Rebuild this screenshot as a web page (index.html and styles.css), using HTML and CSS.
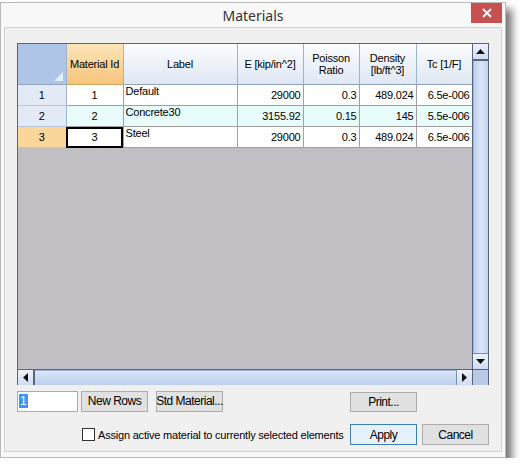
FILE: index.html
```html
<!DOCTYPE html>
<html lang="en">
<head>
    <meta charset="UTF-8">
    <title>Materials</title>
    <link rel="stylesheet" href="styles.css">
</head>
<body>
    <div class="window">
        <div class="titlebar">
            <span class="title">Materials</span>
            <div class="close">
                <svg width="10" height="10" viewBox="0 0 10 10"><path d="M1 1 L9 9 M9 1 L1 9" stroke="#fff" stroke-width="1.8"/></svg>
            </div>
        </div>
        <div class="client">
            <div class="grid">
                <div class="sheet">
                    <table class="cells">
                        <colgroup>
                            <col style="width:48px"><col style="width:57px"><col style="width:114px"><col style="width:66px"><col style="width:56px"><col style="width:57px"><col style="width:56px">
                        </colgroup>
                        <tr class="head">
                            <th class="corner-head"><span class="tri"></span></th>
                            <th class="active-col">Material Id</th>
                            <th>Label</th>
                            <th>E [kip/in^2]</th>
                            <th>Poisson<br>Ratio</th>
                            <th>Density<br>[lb/ft^3]</th>
                            <th>Tc [1/F]</th>
                        </tr>
                        <tr>
                            <td class="rowhead">1</td>
                            <td class="center">1</td>
                            <td class="text">Default</td>
                            <td class="num">29000</td>
                            <td class="num">0.3</td>
                            <td class="num">489.024</td>
                            <td class="num">6.5e-006</td>
                        </tr>
                        <tr class="alt">
                            <td class="rowhead">2</td>
                            <td class="center">2</td>
                            <td class="text">Concrete30</td>
                            <td class="num">3155.92</td>
                            <td class="num">0.15</td>
                            <td class="num">145</td>
                            <td class="num">5.5e-006</td>
                        </tr>
                        <tr>
                            <td class="rowhead active-row">3</td>
                            <td class="center current">3</td>
                            <td class="text">Steel</td>
                            <td class="num">29000</td>
                            <td class="num">0.3</td>
                            <td class="num">489.024</td>
                            <td class="num">6.5e-006</td>
                        </tr>
                    </table>
                </div>
                <div class="vscroll">
                    <div class="arrow up"><svg width="9" height="5" viewBox="0 0 9 5"><path d="M0 5 L4.5 0 L9 5 Z" fill="#111"/></svg></div>
                    <div class="thumb-v"></div>
                    <div class="arrow down"><svg width="9" height="5" viewBox="0 0 9 5"><path d="M0 0 L4.5 5 L9 0 Z" fill="#111"/></svg></div>
                </div>
                <div class="hscroll">
                    <div class="arrow left"><svg width="5" height="9" viewBox="0 0 5 9"><path d="M5 0 L0 4.5 L5 9 Z" fill="#111"/></svg></div>
                    <div class="thumb-h"></div>
                    <div class="arrow right"><svg width="5" height="9" viewBox="0 0 5 9"><path d="M0 0 L5 4.5 L0 9 Z" fill="#111"/></svg></div>
                </div>
                <div class="corner"></div>
            </div>

            <div class="controls">
                <div class="left-row">
                    <div class="count"><span class="sel">1</span></div>
                    <div class="btn new-rows">New Rows</div>
                    <div class="btn std">Std Material...</div>
                </div>
                <div class="btn print">Print...</div>
                <div class="assign">
                    <span class="check"></span>
                    <span>Assign active material to currently selected elements</span>
                </div>
                <div class="btn apply">Apply</div>
                <div class="btn cancel">Cancel</div>
            </div>
        </div>
    </div>
</body>
</html>
```

FILE: styles.css
```css
html, body {
    margin: 0;
    background: #fff;
}
.window {
    margin-top: 2px;
    width: 506px;
    height: 456px;
    border: 1px solid #b9b9b9;
    background: #f8f8f8;
    box-shadow: 6px 7px 8px rgba(0, 0, 0, 0.55);
    display: flex;
    flex-direction: column;
    padding: 0 3px 5px 3px;
    box-sizing: border-box;
    font-family: "Liberation Sans", Arial, sans-serif;
}
.titlebar {
    height: 24px;
    display: flex;
    align-items: center;
    justify-content: center;
    position: relative;
}
.title {
    font-family: "Noto Sans", "Open Sans", sans-serif;
    font-size: 14px;
    color: #333;
}
.close {
    position: absolute;
    right: 0;
    top: 0;
    width: 31px;
    height: 20px;
    background: #c75050;
    display: flex;
    align-items: center;
    justify-content: center;
}
.client {
    flex: 1;
    border: 1px solid #d2d2d2;
    background: #f0f0f0;
    padding: 15px 0 0 12px;
}

/* grid control */
.grid {
    display: grid;
    grid-template-columns: 454px 16px;
    grid-template-rows: 325px 16px;
    width: 472px;
    height: 342px;
    border: 1px solid #56647c;
    box-sizing: border-box;
}
.sheet {
    background: #c1bfc3;
    overflow: hidden;
}
.cells {
    border-collapse: collapse;
    table-layout: fixed;
    width: 454px;
    font-size: 11px;
    letter-spacing: -0.2px;
    color: #000;
}
.cells th {
    height: 40px;
    padding: 0 2px;
    font-weight: normal;
    background: linear-gradient(#fafcfe, #dfe7f3);
    border-right: 1px solid #9fb3cd;
    border-bottom: 1px solid #8ea4c2;
    line-height: 12px;
}
.cells th.corner-head {
    background: #aec5e8;
    position: relative;
}
.tri {
    position: absolute;
    right: 3px;
    bottom: 3px;
    width: 0;
    height: 0;
    border-left: 9px solid transparent;
    border-bottom: 9px solid #e6edf8;
}
.cells th.active-col {
    background: linear-gradient(#fce5b9, #f6c47c);
    border-right-color: #d9a963;
    border-bottom-color: #d3a35c;
}
.cells td {
    height: 20px;
    padding: 0 2px;
    border-right: 1px solid #a0a0a0;
    border-bottom: 1px solid #a0a0a0;
    background: #fff;
    white-space: nowrap;
    overflow: hidden;
}
.cells tr.alt td {
    background: #e8fcfc;
}
.cells td.rowhead,
.cells tr.alt td.rowhead {
    background: #e3eaf5;
    text-align: center;
    border-right: 1px solid #9fb3cd;
    border-bottom: 1px solid #b9c6d8;
}
.cells td.active-row {
    background: #fbd69b;
    border-right-color: #d9a963;
}
.center {
    text-align: center;
}
.num {
    text-align: right;
}
.text {
    vertical-align: top;
    padding-top: 2px;
}
.cells td.current {
    outline: 2px solid #000;
    outline-offset: -2px;
}

/* scroll bars */
.vscroll {
    display: flex;
    flex-direction: column;
    border-left: 1px solid #56647c;
    background: #c7d7f0;
}
.hscroll {
    display: flex;
    border-top: 1px solid #56647c;
    background: #c7d7f0;
}
.arrow {
    display: flex;
    align-items: center;
    justify-content: center;
    background: linear-gradient(#edf2fb, #cfdcf1);
    flex: none;
}
.vscroll .arrow {
    height: 15px;
}
.vscroll .up {
    border-bottom: 2px solid #56647c;
}
.vscroll .down {
    border-top: 1px solid #7d8daa;
}
.hscroll .arrow {
    width: 15px;
}
.hscroll .left {
    border-right: 2px solid #56647c;
}
.hscroll .right {
    border-left: 1px solid #7d8daa;
}
.thumb-v {
    flex: 1;
    background: linear-gradient(to right, #bccfee, #dbe6f7 50%, #c2d4f0);
    border-left: 1px solid #9fb3d6;
}
.thumb-h {
    flex: 1;
    background: linear-gradient(#dbe6f7, #bccfee);
    border-top: 1px solid #9fb3d6;
}
.corner {
    background: #b8cae8;
    border-top: 1px solid #56647c;
    border-left: 1px solid #56647c;
}

/* buttons and options */
.controls {
    display: grid;
    grid-template-columns: 333px 67px 5px 67px;
    grid-template-rows: 22px 21px;
    row-gap: 12px;
    margin-top: 5px;
    font-size: 12px;
}
.left-row {
    display: flex;
    align-items: center;
}
.count {
    width: 61px;
    height: 21px;
    border: 1px solid #7eb4ea;
    background: #fff;
    padding: 2px 0 0 1px;
    box-sizing: border-box;
    line-height: 15px;
}
.sel {
    background: #3399ff;
    color: #fff;
    padding: 0 1px;
}
.btn {
    height: 21px;
    border: 1px solid #adadad;
    background: #e1e1e1;
    box-sizing: border-box;
    display: flex;
    align-items: center;
    justify-content: center;
    color: #000;
    white-space: nowrap;
    letter-spacing: -0.5px;
}
.new-rows {
    width: 67px;
    margin-left: 3px;
}
.std {
    width: 67px;
    margin-left: 8px;
}
.print {
    grid-column: 2;
    margin-top: 2px;
    height: 20px;
}
.assign {
    grid-column: 1;
    grid-row: 2;
    display: flex;
    align-items: center;
    padding-left: 65px;
    font-size: 11px;
    letter-spacing: -0.2px;
}
.check {
    width: 11px;
    height: 11px;
    border: 1px solid #333;
    background: #fff;
    margin-right: 3px;
}
.apply {
    grid-column: 2;
    grid-row: 2;
    border-color: #3c7fb1;
    background: #e5f1fb;
}
.cancel {
    grid-column: 4;
    grid-row: 2;
}
```
